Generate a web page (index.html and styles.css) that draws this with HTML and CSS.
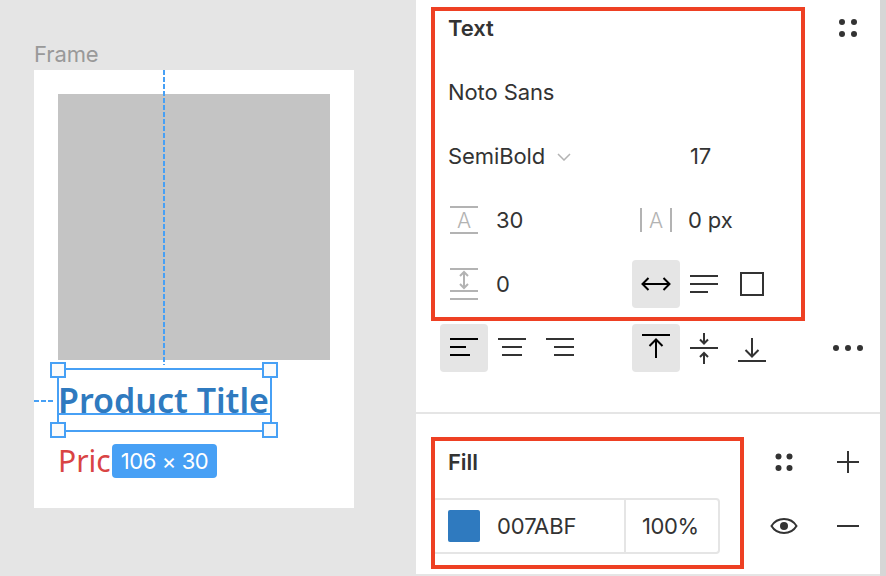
FILE: index.html
```html
<!DOCTYPE html>
<html lang="en">
<head>
<meta charset="utf-8">
<title>Text properties</title>
<link rel="stylesheet" href="styles.css">
</head>
<body>
<main class="canvas">
  <div class="frame-name">Frame</div>
  <div class="frame">
    <div class="picture"></div>
    <div class="guide guide-v"></div>
    <div class="guide guide-h"></div>
    <div class="price">Price</div>
    <div class="title">Product Title</div>
    <div class="selection">
      <div class="baseline"></div>
      <span class="handle tl"></span><span class="handle tr"></span>
      <span class="handle bl"></span><span class="handle br"></span>
    </div>
    <div class="badge">106 × 30</div>
  </div>
</main>

<aside class="panel">
  <section class="section text-section">
    <div class="row">
      <div class="cell span8 heading">Text</div>
      <svg class="icon" viewBox="0 0 48 48"><g class="solid"><circle cx="18" cy="18" r="3"/><circle cx="30" cy="18" r="3"/><circle cx="18" cy="30" r="3"/><circle cx="30" cy="30" r="3"/></g></svg>
    </div>
    <div class="row"><div class="cell span4">Noto Sans</div></div>
    <div class="row">
      <div class="cell span4">SemiBold
        <svg class="chevron" viewBox="0 0 14 8"><path d="M1 1l6 6 6-6"/></svg>
      </div>
      <div class="cell span4 offset">17</div>
    </div>
    <div class="row">
      <svg class="icon" viewBox="0 0 48 48"><path class="muted" d="M10 11h28M10 37h28"/><text class="glyph" x="24" y="32">A</text></svg>
      <div class="cell span3">30</div>
      <svg class="icon" viewBox="0 0 48 48"><path class="muted" d="M9 12v24M39 12v24"/><text class="glyph" x="24" y="32">A</text></svg>
      <div class="cell span3">0 px</div>
    </div>
    <div class="row">
      <svg class="icon" viewBox="0 0 48 48"><path class="muted" d="M10 9h28M10 31h28M10 39h28M24 13v14M20 16l4-4 4 4M20 24l4 4 4-4"/></svg>
      <div class="cell span3">0</div>
      <svg class="icon active" viewBox="0 0 48 48"><path class="black" d="M11 24h26M16.500 18l-6 6 6 6M31.500 18l6 6-6 6"/></svg>
      <svg class="icon" viewBox="0 0 48 48"><path class="line" d="M10 16h28M10 24h28M10 32h18"/></svg>
      <svg class="icon" viewBox="0 0 48 48"><rect class="line" x="13" y="13" width="22" height="22"/></svg>
    </div>
    <div class="row">
      <svg class="icon active" viewBox="0 0 48 48"><path class="black" d="M10 15h28M10 23h16M10 31h20"/></svg>
      <svg class="icon" viewBox="0 0 48 48"><path class="line" d="M10 15h28M14 23h20M14 31h20"/></svg>
      <svg class="icon" viewBox="0 0 48 48"><path class="line" d="M10 15h28M18 23h20M18 31h20"/></svg>
      <span></span>
      <svg class="icon active" viewBox="0 0 48 48"><path class="black" d="M10 11h28M24 34V16M17.500 22l6.500-6.500 6.500 6.500"/></svg>
      <svg class="icon" viewBox="0 0 48 48"><path class="line" d="M10 24h28M24 9v10M20 15.500l4 4 4-4M24 40V29.500M20 33l4-4 4 4"/></svg>
      <svg class="icon" viewBox="0 0 48 48"><path class="line" d="M10 37h28M24 14v18M17.500 26l6.500 6.500 6.500-6.500"/></svg>
      <span></span>
      <svg class="icon" viewBox="0 0 48 48"><g class="solid"><circle cx="12" cy="24" r="3"/><circle cx="24" cy="24" r="3"/><circle cx="36" cy="24" r="3"/></g></svg>
    </div>
  </section>

  <section class="section fill-section">
    <div class="fill-row">
      <div class="heading fill-heading">Fill</div>
      <svg class="icon" viewBox="0 0 48 48"><g class="solid"><circle cx="18.500" cy="18.500" r="3"/><circle cx="29.500" cy="18.500" r="3"/><circle cx="18.500" cy="30" r="3"/><circle cx="29.500" cy="30" r="3"/></g></svg>
      <svg class="icon" viewBox="0 0 48 48"><path class="line" d="M13 24h22M24 13v22"/></svg>
    </div>
    <div class="fill-row">
      <div class="fill-input">
        <div class="fill-color"><span class="swatch"></span>007ABF</div>
        <div class="fill-opacity">100%</div>
      </div>
      <svg class="icon" viewBox="0 0 48 48"><path class="line" d="M11.500 24c3-5 7.500-7 12.500-7s9.500 2 12.500 7c-3 5-7.500 7-12.500 7s-9.500-2-12.500-7z"/><circle class="pupil" cx="24" cy="24" r="4"/></svg>
      <svg class="icon" viewBox="0 0 48 48"><path class="line" d="M13 24h22"/></svg>
    </div>
  </section>

  <div class="callout callout-text"></div>
  <div class="callout callout-fill"></div>
</aside>
<div class="gutter"></div>
</body>
</html>
```
FILE: styles.css
```css
* { box-sizing: border-box; }
html, body { margin: 0; height: 100%; overflow: hidden; }
body {
  display: flex;
  width: 886px;
  height: 576px;
  background: #e5e5e5;
  font-family: Inter, "Liberation Sans", sans-serif;
  font-size: 22px;
  letter-spacing: -0.1px;
  color: #333;
}

/* Canvas */
.canvas { position: relative; width: 416px; height: 576px; flex: none; }
.frame-name { position: absolute; left: 34px; top: 41px; line-height: 26px; color: #999; }
.frame { position: absolute; left: 34px; top: 70px; width: 320px; height: 438px; background: #fff; }
.picture { position: absolute; left: 24px; top: 24px; width: 272px; height: 266px; background: #c4c4c4; }
.guide { position: absolute; }
.guide-v { left: 129px; top: 0; width: 2px; height: 295px; background: repeating-linear-gradient(to bottom, #47a0f5 0 5px, transparent 5px 7px); }
.guide-h { left: 0; top: 330px; width: 20px; height: 2px; background: repeating-linear-gradient(to right, #47a0f5 0 5px, transparent 5px 7px); }
.title {
  position: absolute; left: 24px; top: 307px; letter-spacing: 0;
  font-family: "Noto Sans", sans-serif; font-weight: 600; font-size: 34px; line-height: 46px;
  color: #2f7abf; white-space: nowrap;
}
.price {
  position: absolute; left: 24px; top: 370px; letter-spacing: 0;
  font-family: "Noto Sans", sans-serif; font-size: 30px; line-height: 42px; color: #d94444;
}
.selection { position: absolute; left: 23px; top: 298px; width: 215px; height: 64px; border: 2px solid #47a0f5; }
.baseline { position: absolute; left: 0; right: 0; top: 43px; height: 2px; background: #47a0f5; }
.handle { position: absolute; width: 16px; height: 16px; background: #fbfbfb; border: 2px solid #47a0f5; }
.tl { left: -9px; top: -8px; }
.tr { right: -8px; top: -8px; }
.bl { left: -9px; bottom: -8px; }
.br { right: -8px; bottom: -8px; }
.badge {
  position: absolute; left: 78px; top: 374px; width: 105px; height: 34px;
  display: flex; align-items: center; justify-content: center;
  border-radius: 4px; background: #47a0f5; color: #fff; font-size: 22px; letter-spacing: -0.4px; white-space: nowrap;
}

/* Panel */
.panel { position: relative; width: 464px; height: 576px; flex: none; background: #fff; border-bottom: 2px solid #e5e5e5; }
.gutter { flex: 1; background: #d6d6d6; }
.section { padding-left: 24px; }
.text-section { height: 414px; padding-top: 4px; border-bottom: 2px solid #e5e5e5; display: flex; flex-direction: column; gap: 16px; }
.row { display: grid; grid-template-columns: repeat(9, 48px); height: 48px; align-items: center; }
.cell { padding-left: 8px; white-space: nowrap; display: flex; align-items: center; }
.span3 { grid-column: span 3; }
.span4 { grid-column: span 4; }
.span8 { grid-column: span 8; }
.offset { padding-left: 58px; }
.heading { font-weight: 600; font-size: 22px; color: #333; }
.icon { display: block; width: 48px; height: 48px; border-radius: 4px; }
.active { background: #e5e5e5; }
.line, .black, .muted { fill: none; stroke-width: 2; }
.line { stroke: #333; }
.black { stroke: #000; }
.muted { stroke: #b3b3b3; }
.solid, .pupil { fill: #333; }
.glyph { fill: #b3b3b3; font-size: 21px; font-weight: 300; text-anchor: middle; }
.chevron { width: 14px; height: 8px; margin-left: 12px; margin-top: 2px; fill: none; stroke: #b3b3b3; stroke-width: 1.5; }

.fill-section { padding-top: 24px; padding-right: 8px; display: flex; flex-direction: column; gap: 16px; }
.fill-row { display: flex; height: 48px; align-items: center; }
.fill-row .icon + .icon { margin-left: 16px; }
.fill-heading { width: 320px; padding-left: 8px; }
.fill-input {
  display: flex; width: 288px; height: 56px; margin-left: -8px; margin-right: 40px;
  border: 2px solid #e5e5e5; border-radius: 4px; flex: none;
}
.fill-color { display: flex; align-items: center; width: 192px; padding-left: 14px; gap: 17px; border-right: 2px solid #e5e5e5; }
.fill-opacity { display: flex; align-items: center; padding-left: 16px; letter-spacing: -0.4px; }
.swatch { width: 32px; height: 32px; border-radius: 2px; background: #2f7abf; }

.callout { position: absolute; border: 4px solid #ee4023; pointer-events: none; }
.callout-text { left: 15px; top: 7px; width: 374px; height: 314px; }
.callout-fill { left: 15px; top: 437px; width: 313px; height: 132px; }
```
